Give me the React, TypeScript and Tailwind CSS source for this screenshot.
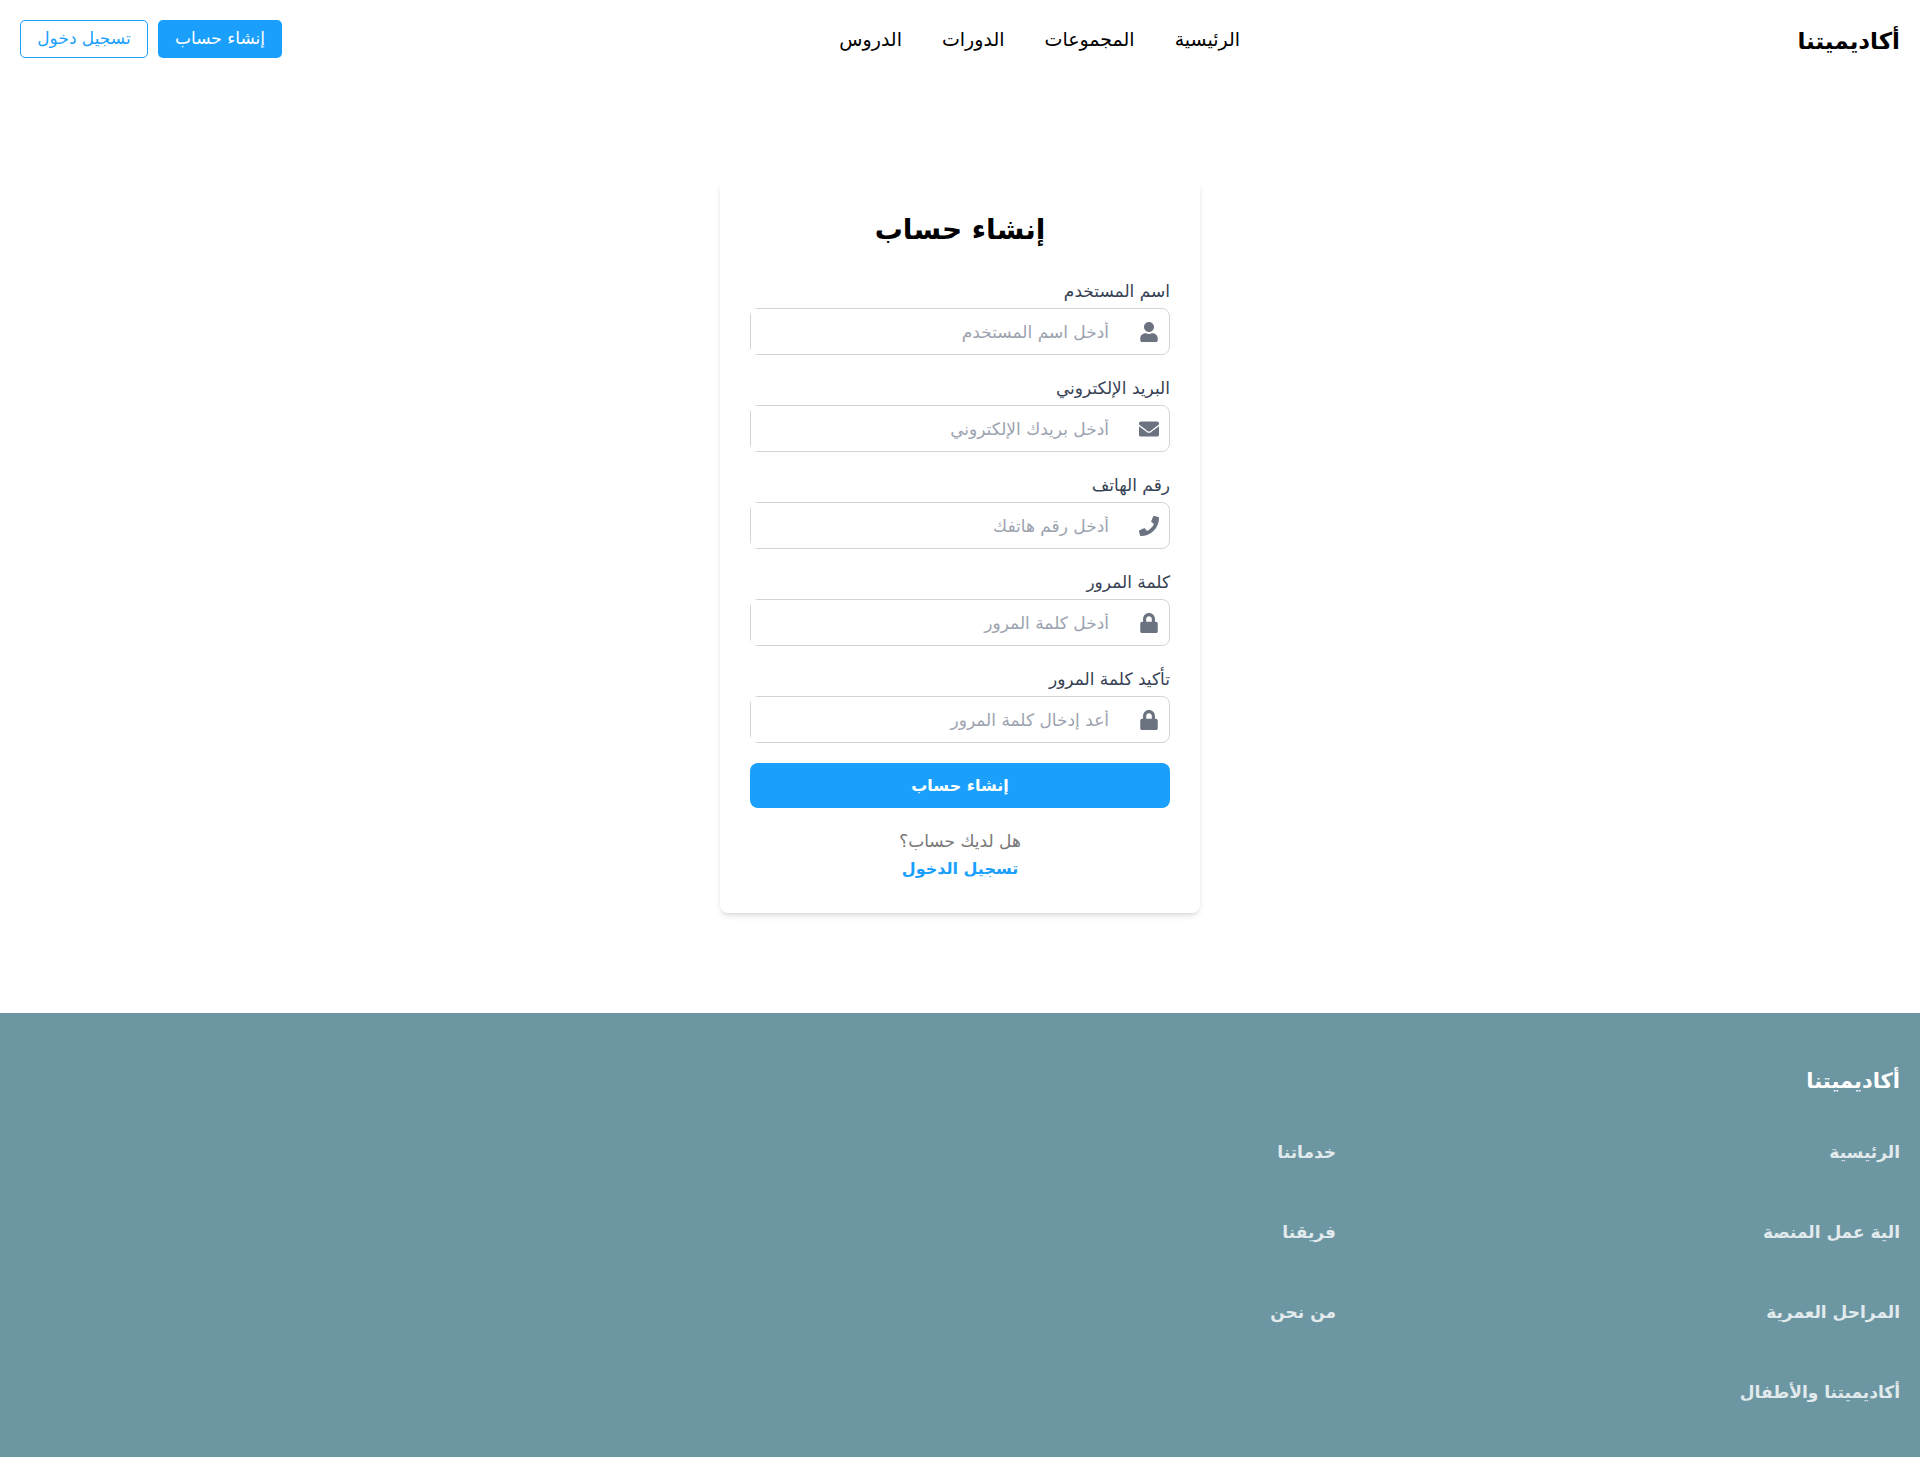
import type { ComponentType } from "react";
import { FaEnvelope, FaLock, FaPhone, FaUser } from "react-icons/fa";

type Field = {
  id: string;
  label: string;
  placeholder: string;
  type: string;
  Icon: ComponentType<{ className?: string }>;
};

const navLinks = ["الرئيسية", "المجموعات", "الدورات", "الدروس"];

const fields: Field[] = [
  { id: "username", label: "اسم المستخدم", placeholder: "أدخل اسم المستخدم", type: "text", Icon: FaUser },
  { id: "email", label: "البريد الإلكتروني", placeholder: "أدخل بريدك الإلكتروني", type: "email", Icon: FaEnvelope },
  { id: "phone", label: "رقم الهاتف", placeholder: "أدخل رقم هاتفك", type: "tel", Icon: FaPhone },
  { id: "password", label: "كلمة المرور", placeholder: "أدخل كلمة المرور", type: "password", Icon: FaLock },
  { id: "confirm", label: "تأكيد كلمة المرور", placeholder: "أعد إدخال كلمة المرور", type: "password", Icon: FaLock },
];

const footerColumns = [
  ["الرئيسية", "الية عمل المنصة", "المراحل العمرية", "أكاديميتنا والأطفال"],
  ["خدماتنا", "فريقنا", "من نحن"],
];

function Header() {
  return (
    <header className="flex items-center justify-between p-5">
      <a href="#" className="pt-1 text-[23px] leading-8 font-bold">أكاديميتنا</a>
      <nav className="flex gap-10 text-[19px] leading-7">
        {navLinks.map((text) => (
          <a key={text} href="#">{text}</a>
        ))}
      </nav>
      <div className="flex gap-[10px] text-[17px]">
        <button className="h-[38px] w-[124px] rounded-[5px] bg-[#1a9ffd] whitespace-nowrap text-white">إنشاء حساب</button>
        <button className="h-[38px] w-[128px] rounded-[5px] border border-[#1a9ffd] whitespace-nowrap text-[#1a9ffd]">تسجيل دخول</button>
      </div>
    </header>
  );
}

function FormField({ id, label, placeholder, type, Icon }: Field) {
  return (
    <div className="mb-5">
      <label htmlFor={id} className="mb-1 block text-[17px] leading-[26px] text-gray-700">{label}</label>
      <div className="flex h-[47px] items-center rounded-lg border border-[#d1d5db]">
        <Icon className="mx-[10px] size-5 shrink-0 text-[#6b7280]" />
        <input
          id={id}
          type={type}
          placeholder={placeholder}
          className="h-full min-w-0 flex-1 bg-white px-5 text-right text-[17px] outline-none placeholder:text-[#9ca3af]"
        />
      </div>
    </div>
  );
}

function SignUpCard() {
  return (
    <form className="w-full max-w-[480px] rounded-lg bg-white p-[30px] shadow-md">
      <h1 className="mb-[26px] text-center text-[28px] leading-[44px] font-bold">إنشاء حساب</h1>
      {fields.map((field) => (
        <FormField key={field.id} {...field} />
      ))}
      <button type="submit" className="block h-[45px] w-full rounded-lg bg-[#1a9ffd] text-base font-bold text-white">إنشاء حساب</button>
      <div className="mt-[19px] flex flex-col items-center">
        <p className="text-[17px] leading-7 text-[#777777]">هل لديك حساب؟</p>
        <a href="#" className="text-base leading-7 font-bold text-[#1a9ffd]">تسجيل الدخول</a>
      </div>
    </form>
  );
}

function Footer() {
  return (
    <footer className="grow bg-[#6c96a2] px-5 pt-[50px] pb-10 text-white">
      <h2 className="text-[21px] leading-9 font-bold">أكاديميتنا</h2>
      <div className="mt-[38px] flex">
        {footerColumns.map((column) => (
          <ul key={column[0]} className="flex w-[30%] flex-col gap-[50px]">
            {column.map((text) => (
              <li key={text} className="h-[30px]">
                <a href="#" className="text-[17px] leading-[30px] font-bold opacity-80">{text}</a>
              </li>
            ))}
          </ul>
        ))}
      </div>
    </footer>
  );
}

export default function App() {
  return (
    <div dir="rtl" className="flex min-h-screen flex-col bg-white font-['DejaVu_Sans',sans-serif] text-black">
      <Header />
      <main className="flex justify-center px-5 py-[100px]">
        <SignUpCard />
      </main>
      <Footer />
    </div>
  );
}
